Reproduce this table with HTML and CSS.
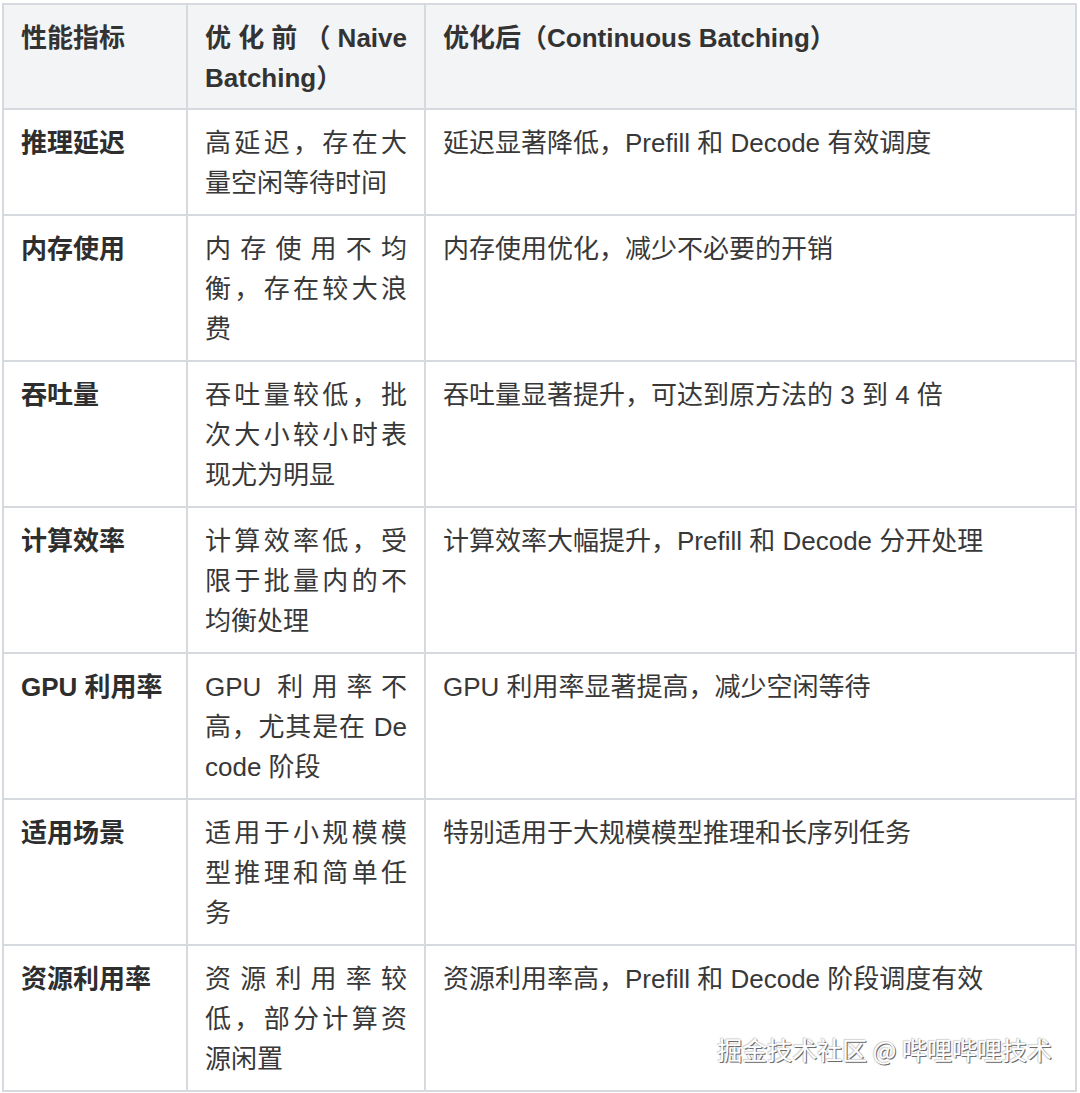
FILE: index.html
```html
<!DOCTYPE html>
<html lang="zh-CN">
<head>
<meta charset="utf-8">
<title>Continuous Batching 对比</title>
<link rel="stylesheet" href="styles.css">
</head>
<body>
<div class="page">
  <table class="cmp">
    <colgroup>
      <col class="c1">
      <col class="c2">
      <col class="c3">
    </colgroup>
    <thead>
      <tr>
        <th>性能指标</th>
        <th class="just">优化前（Naive Batching）</th>
        <th>优化后（Continuous Batching）</th>
      </tr>
    </thead>
    <tbody>
      <tr>
        <td class="key">推理延迟</td>
        <td class="just">高延迟，存在大量空闲等待时间</td>
        <td>延迟显著降低，Prefill 和 Decode 有效调度</td>
      </tr>
      <tr>
        <td class="key">内存使用</td>
        <td class="just">内存使用不均衡，存在较大浪费</td>
        <td>内存使用优化，减少不必要的开销</td>
      </tr>
      <tr>
        <td class="key">吞吐量</td>
        <td class="just">吞吐量较低，批次大小较小时表现尤为明显</td>
        <td>吞吐量显著提升，可达到原方法的 3 到 4 倍</td>
      </tr>
      <tr>
        <td class="key">计算效率</td>
        <td class="just">计算效率低，受限于批量内的不均衡处理</td>
        <td>计算效率大幅提升，Prefill 和 Decode 分开处理</td>
      </tr>
      <tr>
        <td class="key">GPU 利用率</td>
        <td class="just">GPU 利用率不高，尤其是在 Decode 阶段</td>
        <td>GPU 利用率显著提高，减少空闲等待</td>
      </tr>
      <tr>
        <td class="key">适用场景</td>
        <td class="just">适用于小规模模型推理和简单任务</td>
        <td>特别适用于大规模模型推理和长序列任务</td>
      </tr>
      <tr>
        <td class="key">资源利用率</td>
        <td class="just">资源利用率较低，部分计算资源闲置</td>
        <td>资源利用率高，Prefill 和 Decode 阶段调度有效</td>
      </tr>
    </tbody>
  </table>
  <div class="watermark">掘金技术社区 @ 哔哩哔哩技术</div>
</div>
</body>
</html>
```

FILE: styles.css
```css
html, body {
  margin: 0;
  padding: 0;
  background: #ffffff;
}

.page {
  position: relative;
  padding: 3px 0 0 2px;
  width: 1080px;
  height: 1093px;
  box-sizing: border-box;
}

.cmp {
  border-collapse: collapse;
  table-layout: fixed;
  width: 1075px;
  font-family: "Liberation Sans", "Noto Sans CJK SC", sans-serif;
  font-size: 26px;
  line-height: 40px;
  color: #383838;
}

.c1 { width: 184px; }
.c2 { width: 238px; }
.c3 { width: auto; }

.cmp th,
.cmp td {
  border: 2px solid #d6d9dd;
  padding: 13px 17px 11px 17px;
  vertical-align: top;
  text-align: left;
  word-break: break-all;
}

.cmp th {
  background: #f3f4f6;
  font-weight: 600;
  color: #333333;
  word-break: normal;
  padding-bottom: 10px;
}

.cmp td.key {
  font-weight: 700;
  color: #2e2e2e;
}

.cmp .just {
  text-align: justify;
  text-align-last: left;
}

.watermark {
  position: absolute;
  right: 28px;
  top: 1031px;
  font-family: "Noto Sans CJK SC", sans-serif;
  font-size: 25px;
  line-height: 36px;
  color: #ffffff;
  text-shadow: 1px 1px 0 #6b6b6b, -1px -1px 0 #d9d9d9, 0 0 2px #8a8a8a;
}
```
